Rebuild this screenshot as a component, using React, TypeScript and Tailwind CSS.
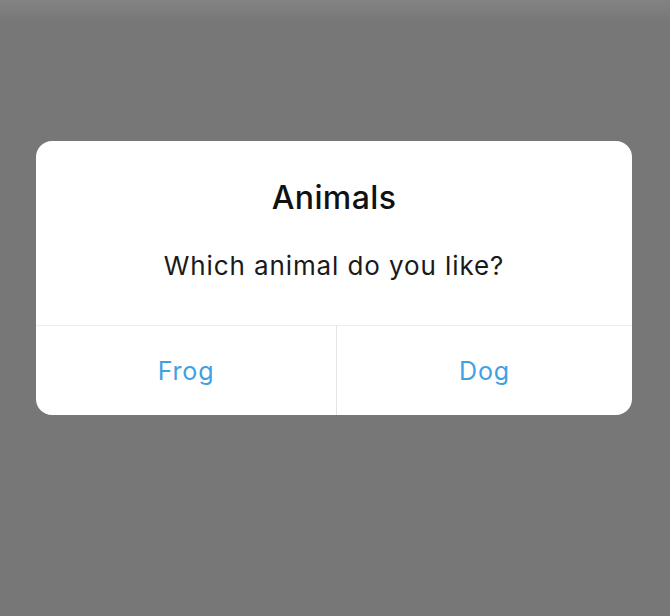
export default function App() {
  return (
    <div
      className="relative h-[616px] w-[670px] overflow-hidden bg-[#777777]"
      style={{ fontFamily: "Inter, 'Noto Sans', sans-serif" }}
    >
      <div className="absolute inset-x-0 top-0 h-[22px] bg-gradient-to-b from-[#838383] to-[#777777]" />
      <div className="relative pt-[141px] pl-[36px]">
        <div className="w-[596px] overflow-hidden rounded-[16px] bg-white">
          <div className="flex h-[184px] flex-col items-center pt-[37px]">
            <div className="text-[32px] leading-[40px] font-medium tracking-[0.4px] text-[#111]">
              Animals
            </div>
            <div className="mt-[31px] text-[26px] leading-[34px] tracking-[0.9px] text-[#1a1a1a]">
              Which animal do you like?
            </div>
          </div>
          <div className="flex h-[90px] border-t border-[#ececec]">
            <button className="flex w-[301px] items-center justify-center border-r border-[#e3e3e3] pt-[3px] text-[25px] tracking-[0.8px] text-[#3fa1e2]">
              Frog
            </button>
            <button className="flex flex-1 items-center justify-center pt-[3px] text-[25px] tracking-[0.8px] text-[#3fa1e2]">
              Dog
            </button>
          </div>
        </div>
      </div>
    </div>
  );
}
